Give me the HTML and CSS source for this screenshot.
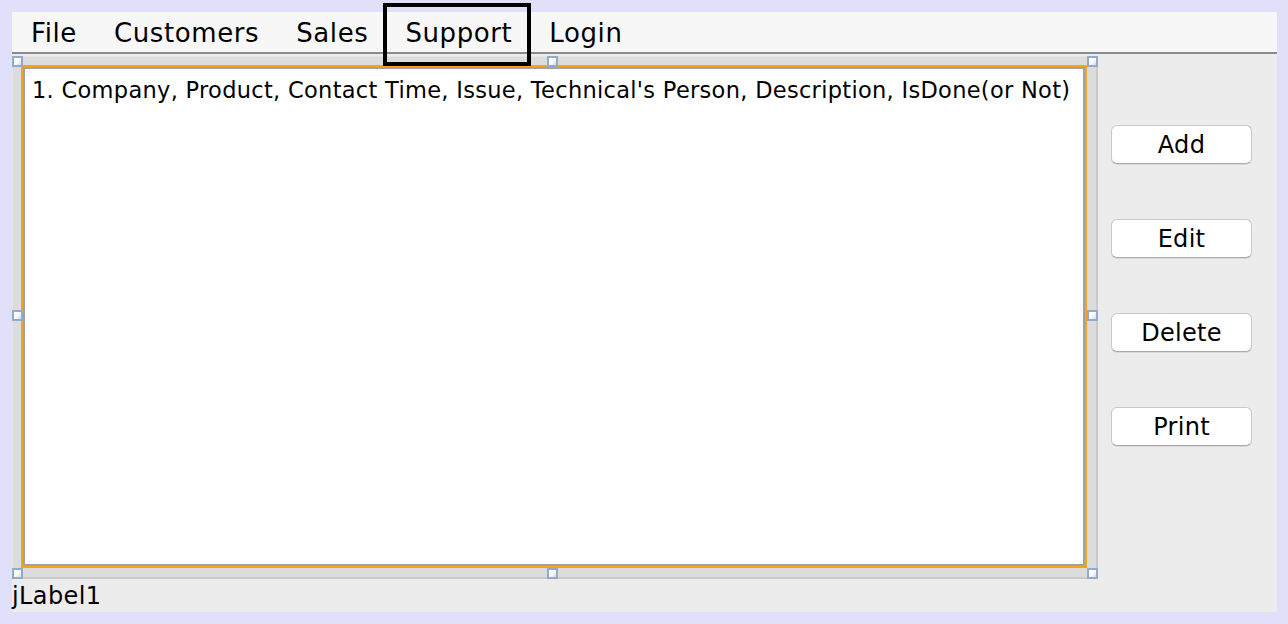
FILE: index.html
```html
<!DOCTYPE html>
<html>
<head>
<meta charset="utf-8">
<link rel="stylesheet" href="styles.css">
</head>
<body>
<div class="frame">
  <div class="menubar">
    <span class="menu">File</span>
    <span class="menu">Customers</span>
    <span class="menu">Sales</span>
    <span class="menu menu-active">Support</span>
    <span class="menu">Login</span>
  </div>
  <div class="main">
    <div class="pane">
      <div class="sel">
        <div class="textarea">1. Company, Product, Contact Time, Issue, Technical's Person, Description, IsDone(or Not)</div>
      </div>
      <span class="handle h-tl"></span>
      <span class="handle h-tc"></span>
      <span class="handle h-tr"></span>
      <span class="handle h-ml"></span>
      <span class="handle h-mr"></span>
      <span class="handle h-bl"></span>
      <span class="handle h-bc"></span>
      <span class="handle h-br"></span>
    </div>
    <div class="buttons">
      <button class="btn">Add</button>
      <button class="btn">Edit</button>
      <button class="btn">Delete</button>
      <button class="btn">Print</button>
    </div>
  </div>
  <div class="label">jLabel1</div>
</div>
</body>
</html>
```

FILE: styles.css
```css
*, *::before, *::after { box-sizing: border-box; }
html, body { margin: 0; padding: 0; }
body {
  background: #e0e0fb;
  width: 1288px;
  height: 624px;
  padding: 12px 11px 12px 12px;
  font-family: "DejaVu Sans", "Liberation Sans", sans-serif;
  color: #000;
  overflow: hidden;
}
.frame {
  width: 1265px;
  height: 600px;
  background: #ececec;
  display: flex;
  flex-direction: column;
}
.menubar {
  height: 42px;
  background: #f7f7f7;
  border-bottom: 2px solid #8a8a8a;
  display: flex;
  align-items: flex-start;
  padding-left: 19px;
  padding-top: 2px;
  gap: 37px;
  font-size: 26px;
  letter-spacing: 0.6px;
  flex: none;
}
.menu {
  position: relative;
  line-height: 38px;
  white-space: nowrap;
}
.menu-active { z-index: 2; }
.menu-active::after {
  content: "";
  position: absolute;
  left: -22px;
  right: -19px;
  top: -11px;
  height: 63px;
  border: 4px solid #000;
}
.main {
  display: flex;
  margin-top: 2px;
  flex: none;
}
.pane {
  position: relative;
  width: 1086px;
  height: 523px;
  background: #dcdcdc;
  border-left: 1px solid #e4e4e4;
  border-right: 2px solid #cacaca;
  border-bottom: 2px solid #cacaca;
  border-top: 1px solid #e6e6e6;
  padding: 8px 9px 9px 8px;
  flex: none;
}
.sel {
  height: 100%;
  border: 2px solid #f8a21e;
}
.textarea {
  height: 100%;
  background: #fff;
  border: 2px solid #a2a2a2;
  padding: 7px 0 0 7px;
  font-size: 22.5px;
  letter-spacing: 0.3px;
  line-height: 28px;
  white-space: nowrap;
}
.handle {
  position: absolute;
  width: 11px;
  height: 11px;
  border: 2px solid #93abc6;
  background: linear-gradient(135deg, #ffffff 0%, #ffffff 45%, #d4dbe4 100%);
}
.h-tl { left: -1px; top: -1px; }
.h-tc { left: 534px; top: -1px; }
.h-tr { right: -2px; top: -1px; }
.h-ml { left: -1px; top: 253px; }
.h-mr { right: -2px; top: 253px; }
.h-bl { left: -1px; bottom: -2px; }
.h-bc { left: 534px; bottom: -2px; }
.h-br { right: -2px; bottom: -2px; }
.buttons {
  display: flex;
  flex-direction: column;
  gap: 55px;
  padding-top: 69px;
  margin-left: 13px;
}
.btn {
  width: 141px;
  height: 39px;
  background: #fff;
  border: 1px solid #c9c9c9;
  border-bottom-color: #a9a9a9;
  border-radius: 6px;
  box-shadow: 0 1px 0 rgba(0,0,0,0.08);
  font-family: "DejaVu Sans", "Liberation Sans", sans-serif;
  font-size: 24px;
  letter-spacing: 0.3px;
  color: #000;
  padding: 0;
  line-height: 36px;
}
.label {
  font-size: 24px;
  letter-spacing: 0.4px;
  line-height: 30px;
  padding-top: 2px;
}
```
